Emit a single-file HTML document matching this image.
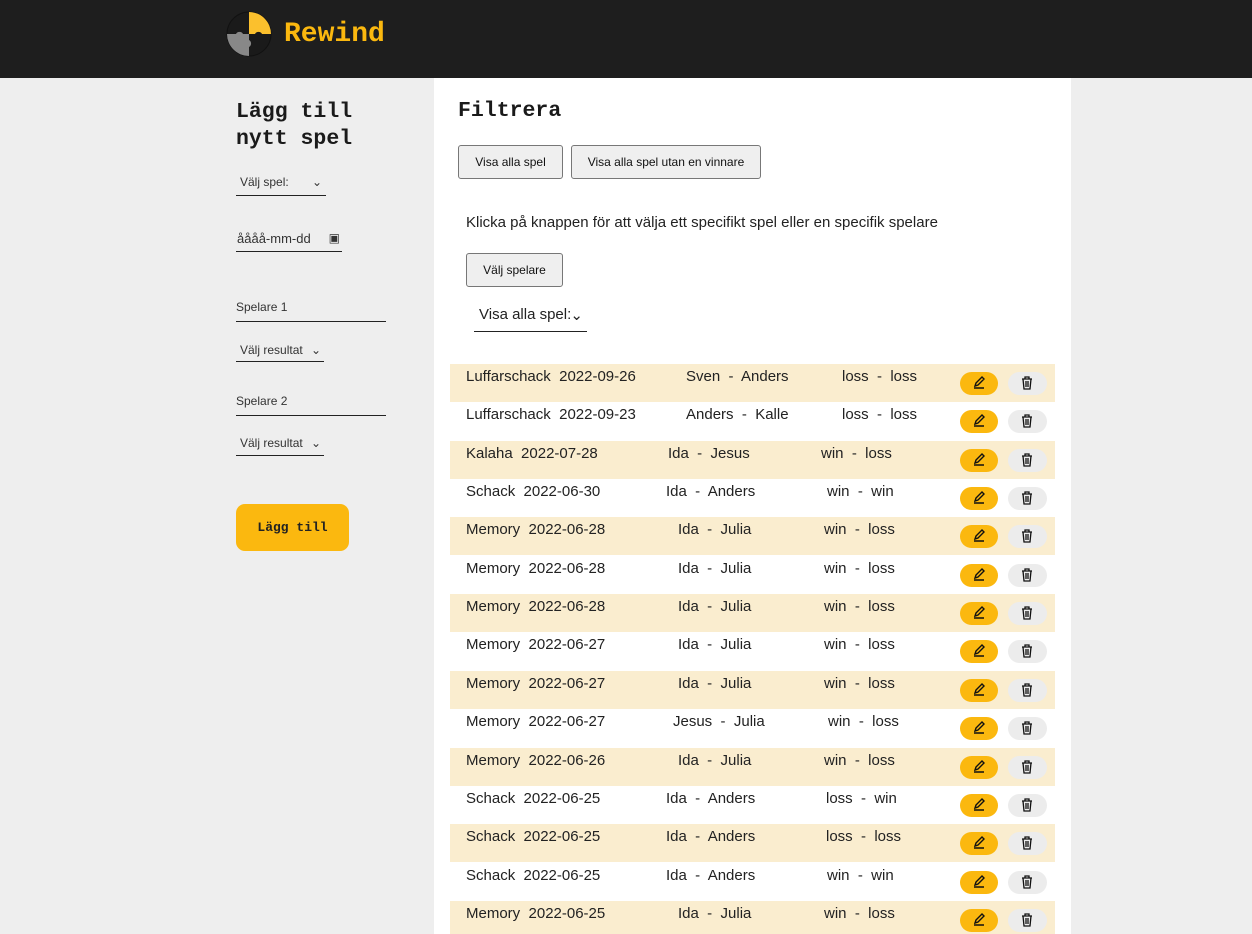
<!DOCTYPE html><html><head><meta charset="utf-8"><style>
*{margin:0;padding:0;box-sizing:border-box}
html,body{width:1252px;height:934px;overflow:hidden}
body{background:#eee;font-family:"Liberation Sans",sans-serif;color:#222;position:relative}
.hdr{position:absolute;left:0;top:0;width:1252px;height:78px;background:#1e1e1e}
.logo{position:absolute;left:284px;top:19px;font:bold 28px "Liberation Mono",monospace;color:#fbb80f}
.abs{position:absolute}
.h{font:bold 21.5px/27px "Liberation Mono",monospace;color:#1a1a1a}
.sel{border-bottom:1px solid #222;font-size:13px;color:#333;white-space:nowrap}
.btn{position:absolute;background:#efefef;border:1px solid #777;border-radius:3px;font-size:12px;color:#111;text-align:center}
.panel{position:absolute;left:434px;top:78px;width:637px;height:856px;background:#fff}
.row{position:absolute;left:450px;width:605px;height:38px;font-size:15px;color:#222}
.row.c{background:#faedcf}
.row span{position:absolute;top:4px;white-space:pre}
.e{position:absolute;left:510px;top:8px;width:38px;height:23px;border-radius:12px;background:#fbb80f}
.d{position:absolute;left:558px;top:8px;width:39px;height:23px;border-radius:12px;background:#ececec}
.e svg,.d svg{position:absolute;left:12px;top:4px}
</style></head><body>
<div class="hdr">
<svg class="abs" style="left:226px;top:11px" width="46" height="46" viewBox="0 0 46 46"><circle cx="23" cy="23" r="22" fill="#1a1a1a" stroke="#111"/><path d="M23 1A22 22 0 0 1 45 23H36a4 4 0 0 0-7 0H23z" fill="#fbc02d"/><path d="M1 23A22 22 0 0 0 23 45V36a4 4 0 0 0 0-7V23H17a4 4 0 0 0-7 0z" fill="#888"/></svg>
<div class="logo">Rewind</div></div>
<div class="abs h" style="left:236px;top:99px">Lägg till<br>nytt spel</div>
<div class="abs sel" style="left:236px;top:172px;width:90px;height:24px;padding:3px 4px;font-size:12px">Välj spel: <span style="position:absolute;right:4px">⌄</span></div>
<div class="abs sel" style="left:236px;top:229px;width:106px;height:23px;padding:2px 1px;font-size:13px">åååå-mm-dd <span style="position:absolute;right:2px;font-size:12px">▣</span></div>
<div class="abs sel" style="left:236px;top:300px;width:150px;height:22px;font-size:12px">Spelare 1</div>
<div class="abs sel" style="left:236px;top:340px;width:88px;height:22px;padding:3px 4px;font-size:12px">Välj resultat <span style="position:absolute;right:3px">⌄</span></div>
<div class="abs sel" style="left:236px;top:394px;width:150px;height:22px;font-size:12px">Spelare 2</div>
<div class="abs sel" style="left:236px;top:433px;width:88px;height:23px;padding:3px 4px;font-size:12px">Välj resultat <span style="position:absolute;right:3px">⌄</span></div>
<div class="abs" style="left:236px;top:504px;width:113px;height:47px;background:#fbb80f;border-radius:9px;font:bold 13px/47px 'Liberation Mono',monospace;text-align:center;color:#222">Lägg till</div>
<div class="panel"></div>
<div class="abs h" style="left:458px;top:98px">Filtrera</div>
<div class="btn" style="left:458px;top:145px;width:105px;height:34px;line-height:32px">Visa alla spel</div>
<div class="btn" style="left:571px;top:145px;width:190px;height:34px;line-height:32px">Visa alla spel utan en vinnare</div>
<div class="abs" style="left:466px;top:214px;font-size:15px">Klicka på knappen för att välja ett specifikt spel eller en specifik spelare</div>
<div class="btn" style="left:466px;top:253px;width:97px;height:34px;line-height:32px">Välj spelare</div>
<div class="abs sel" style="left:474px;top:305px;width:113px;height:27px;font-size:15px;padding:1px 5px;color:#222">Visa alla spel: <span style="position:absolute;right:4px">⌄</span></div>
<div id="rows"></div>
<script>
var d=[["Luffarschack  2022-09-26","Sven  -  Anders",236,"loss  -  loss",392],
["Luffarschack  2022-09-23","Anders  -  Kalle",236,"loss  -  loss",392],
["Kalaha  2022-07-28","Ida  -  Jesus",218,"win  -  loss",371],
["Schack  2022-06-30","Ida  -  Anders",216,"win  -  win",377],
["Memory  2022-06-28","Ida  -  Julia",228,"win  -  loss",374],
["Memory  2022-06-28","Ida  -  Julia",228,"win  -  loss",374],
["Memory  2022-06-28","Ida  -  Julia",228,"win  -  loss",374],
["Memory  2022-06-27","Ida  -  Julia",228,"win  -  loss",374],
["Memory  2022-06-27","Ida  -  Julia",228,"win  -  loss",374],
["Memory  2022-06-27","Jesus  -  Julia",223,"win  -  loss",378],
["Memory  2022-06-26","Ida  -  Julia",228,"win  -  loss",374],
["Schack  2022-06-25","Ida  -  Anders",216,"loss  -  win",376],
["Schack  2022-06-25","Ida  -  Anders",216,"loss  -  loss",376],
["Schack  2022-06-25","Ida  -  Anders",216,"win  -  win",377],
["Memory  2022-06-25","Ida  -  Julia",228,"win  -  loss",374]];
var pen='<svg width="14" height="14" viewBox="0 0 14 14" fill="none" stroke="#111" stroke-width="1.4"><path d="M2 12h10M3 10l1-3 6-6 2 2-6 6z"/></svg>';
var tr='<svg width="14" height="14" viewBox="0 0 14 14" fill="none" stroke="#111" stroke-width="1.3"><path d="M2 3h10M5 3V1h4v2M3 3l1 10h6l1-10M6 5v6M8 5v6"/></svg>';
var h='';d.forEach(function(r,i){var t=364+Math.round(i*38.35);
h+='<div class="row'+(i%2==0?' c':'')+'" style="top:'+t+'px"><span style="left:16px">'+r[0]+'</span><span style="left:'+r[2]+'px">'+r[1]+'</span><span style="left:'+r[4]+'px">'+r[3]+'</span><div class="e">'+pen+'</div><div class="d">'+tr+'</div></div>';});
document.getElementById('rows').innerHTML=h;
</script>
</body></html>
